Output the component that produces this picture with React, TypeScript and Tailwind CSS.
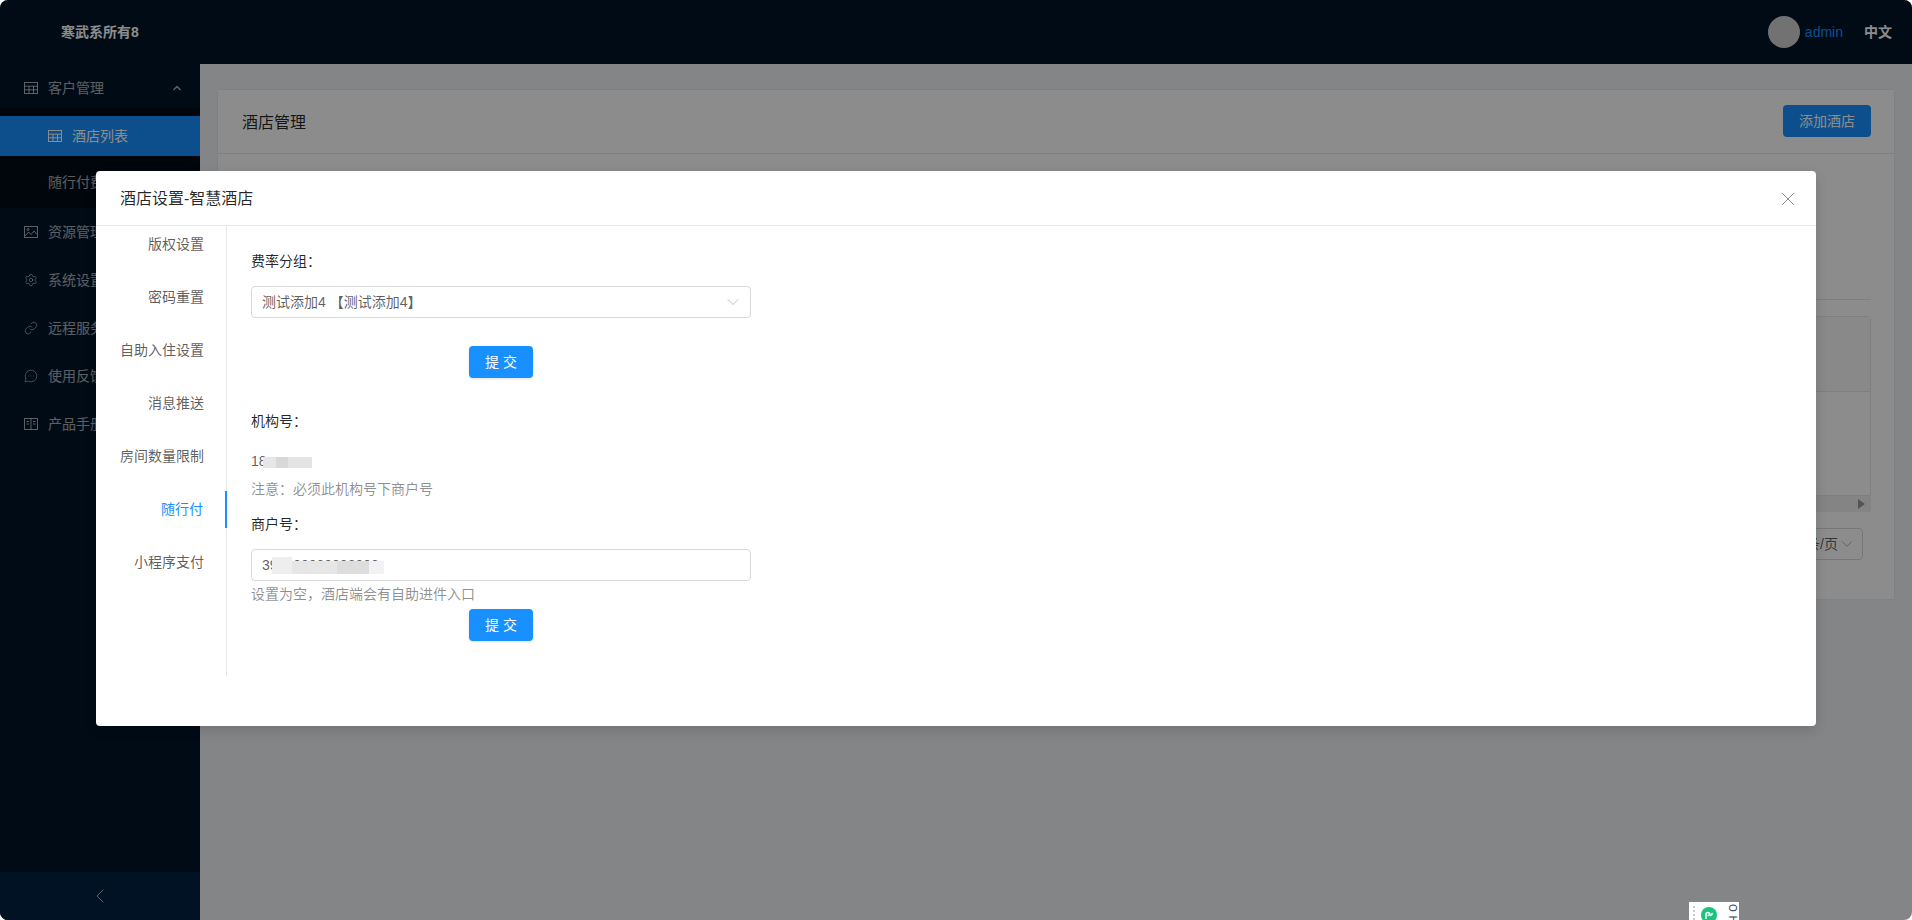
import React from 'react';
import { Settings, Link, MessageCircleMore, ChevronUp, ChevronDown, ChevronLeft, X } from 'lucide-react';

const cjk = { fontFamily: '"Liberation Sans", "Noto Sans CJK SC", sans-serif' };

function TableIcon() {
  return (
    <svg width="14" height="12" viewBox="0 0 14 12" fill="none" stroke="currentColor" strokeWidth="1">
      <rect x="0.5" y="0.5" width="13" height="11" />
      <path d="M0.5 4.2H13.5M0.5 7.8H13.5M5 4.2V11.5M9.5 4.2V11.5" />
    </svg>
  );
}

function PictureIcon() {
  return (
    <svg width="14" height="12" viewBox="0 0 14 12" fill="none" stroke="currentColor" strokeWidth="1">
      <rect x="0.5" y="0.5" width="13" height="11" />
      <path d="M1 10L4.5 6L7 8.5L10 5L13 8.5" />
      <circle cx="4" cy="3.5" r="1" />
    </svg>
  );
}

function ManualIcon() {
  return (
    <svg width="14" height="12" viewBox="0 0 14 12" fill="none" stroke="currentColor" strokeWidth="1">
      <rect x="0.5" y="0.5" width="13" height="11" />
      <path d="M7 0.5V11.5M2.5 3.5H5M2.5 6H5M9 3.5H11.5M9 6H11.5" />
    </svg>
  );
}

const menuItems = [
  { label: '资源管理', icon: <PictureIcon /> },
  { label: '系统设置', icon: <Settings size={14} strokeWidth={1.3} /> },
  { label: '远程服务', icon: <Link size={14} strokeWidth={1.3} /> },
  { label: '使用反馈', icon: <MessageCircleMore size={14} strokeWidth={1.3} /> },
  { label: '产品手册', icon: <ManualIcon /> },
];

const tabs = ['版权设置', '密码重置', '自助入住设置', '消息推送', '房间数量限制', '随行付', '小程序支付'];

function SubmitButton({ className }: { className: string }) {
  return (
    <div className={`flex justify-center w-[500px] ${className}`}>
      <button className="w-16 h-8 bg-[#1890ff] rounded text-white text-sm shadow-sm">提 交</button>
    </div>
  );
}

export default function App() {
  return (
    <div className="relative w-[1912px] h-[920px] overflow-hidden bg-white" style={cjk}>
      <div className="flex flex-col w-full h-full rounded-[8px] overflow-hidden bg-[#f0f2f5]">
        <header className="h-16 shrink-0 bg-[#001529] flex items-center justify-between pl-[61px] pr-[20px]">
          <span className="text-sm font-bold text-white">寒武系所有8</span>
          <div className="flex items-center">
            <div className="w-8 h-8 rounded-full bg-[#d0d0d0]" />
            <span className="ml-[5px] text-sm text-[#1890ff]">admin</span>
            <span className="ml-[21px] text-sm font-bold text-white">中文</span>
          </div>
        </header>
        <div className="flex flex-1 min-h-0">
          <aside className="w-[200px] shrink-0 bg-[#001529] flex flex-col text-sm text-white/65">
            <div className="flex-1 pt-1">
              <div className="h-10 flex items-center pl-6 pr-[17px]">
                <TableIcon />
                <span className="ml-[10px] flex-1">客户管理</span>
                <ChevronUp size={12} strokeWidth={3} />
              </div>
              <div className="bg-[#000c17] h-[100px] pt-2">
                <div className="h-10 flex items-center pl-12 bg-[#1890ff] text-white">
                  <TableIcon />
                  <span className="ml-[10px]">酒店列表</span>
                </div>
                <div className="h-[52px] flex items-center pl-12">随行付费</div>
              </div>
              {menuItems.map((item) => (
                <div key={item.label} className="h-12 flex items-center pl-6">
                  {item.icon}
                  <span className="ml-[10px]">{item.label}</span>
                </div>
              ))}
            </div>
            <div className="h-12 shrink-0 bg-[#002140] flex items-center justify-center">
              <ChevronLeft size={24} strokeWidth={1} />
            </div>
          </aside>
          <main className="flex-1 pt-[25px] pl-[17px] pr-[17px]">
            <div className="h-[511px] bg-white border border-[#ececec]">
              <div className="h-[64px] pb-px border-b border-[#e8e8e8] flex items-center justify-between pl-6 pr-[23px]">
                <span className="mt-[4px] text-base text-black/85">酒店管理</span>
                <button className="w-[88px] h-8 bg-[#1890ff] rounded text-sm text-white">添加酒店</button>
              </div>
              <div className="pl-6 pr-[23px]">
                <div className="mt-[145px] border-t border-[#e8e8e8]" />
                <div className="mt-4 h-[180px] border border-[#e8e8e8] rounded-t">
                  <div className="h-[75px] bg-[#fafafa] border-b border-[#e8e8e8]" />
                </div>
                <div className="h-4 bg-[#f1f1f1] flex items-center justify-end pr-[6px]">
                  <div className="w-0 h-0 border-y-[5px] border-y-transparent border-l-[7px] border-l-[#999]" />
                </div>
                <div className="flex justify-end mt-4 pr-2">
                  <div className="h-8 w-[110px] border border-[#d9d9d9] rounded flex items-center justify-end pr-[6px] text-sm text-black/65">
                    条/页<ChevronDown size={18} strokeWidth={1} className="text-black/40" />
                  </div>
                </div>
              </div>
            </div>
          </main>
        </div>
      </div>

      <div className="absolute inset-0 bg-black/45 rounded-[8px]" />

      {/* mini program widget, not dimmed by the mask */}
      <div className="absolute left-[1689px] top-[902px] w-[50px] h-[18px] bg-white overflow-hidden">
        <div className="absolute left-[4px] top-[4px] h-[14px] border-l-2 border-dotted border-[#ccc]" />
        <svg className="absolute left-[12px] top-[5px]" width="16" height="16" viewBox="0 0 16 16">
          <circle cx="8" cy="8" r="8" fill="#19c37d" />
          <path d="M5 12V7.5C5 6 6 5.5 7 5.5S9 6.5 8.5 7.5 7 8.5 6.5 8.5M8.5 8.5C10 8.5 11.5 7.5 11 6" fill="none" stroke="#fff" strokeWidth="1.6" />
        </svg>
        <div className="absolute left-[38px] top-[2px] text-[10px] leading-[10px] tracking-[4px] text-[#2b3a67] [writing-mode:vertical-rl]">OH</div>
      </div>

      <div className="absolute left-[96px] top-[171px] w-[1720px] h-[555px] bg-white rounded shadow-[0_4px_12px_rgba(0,0,0,0.15)]">
        <div className="h-[55px] pt-[2px] border-b border-[#e8e8e8] flex items-center justify-between pl-6 pr-[17px]">
          <span className="text-base text-black/85">酒店设置-智慧酒店</span>
          <X size={22} strokeWidth={1} className="text-black/50" />
        </div>
        <div className="flex h-[450px]">
          <div className="w-[131px] border-r border-[#e8e8e8] text-sm text-black/65">
            {tabs.map((t) => (
              <div
                key={t}
                className={`h-[37px] mb-4 pb-[2px] flex items-center justify-end -mr-px ${t === '随行付' ? 'pr-[22px] text-[#1890ff] border-r-2 border-[#1890ff]' : 'pr-[23px]'}`}
              >
                {t}
              </div>
            ))}
          </div>
          <div className="flex-1 pl-6 text-sm text-black/65">
            <div className="mt-[25px] text-black/85">费率分组：</div>
            <div className="mt-[15px] w-[500px] h-8 border border-[#d9d9d9] rounded flex items-center justify-between pl-[10px] pr-[7px]">
              <span>测试添加4 【测试添加4】</span>
              <ChevronDown size={20} strokeWidth={1} className="text-black/30" />
            </div>
            <SubmitButton className="mt-7" />
            <div className="mt-[33px] text-black/85">机构号：</div>
            <div className="relative mt-[20px] h-[21px] leading-[21px]">
              18
              <div className="absolute left-[12px] top-[6px] flex h-[11px]">
                <div className="w-[13px] bg-[#e6e6e6]" />
                <div className="w-[12px] bg-[#d8d8d8]" />
                <div className="w-[24px] bg-[#e4e4e4]" />
              </div>
            </div>
            <div className="mt-[7px] text-black/45">注意：必须此机构号下商户号</div>
            <div className="mt-[15px] text-black/85">商户号：</div>
            <div className="relative mt-[15px] w-[500px] h-8 border border-[#d9d9d9] rounded flex items-center pl-[10px]">
              390000000000000
              <div className="absolute left-[20px] top-[7px] w-[20px] h-[17px] bg-[#eeeeee]" />
              <div className="absolute left-[40px] top-[11px] flex h-[13px]">
                <div className="w-[45px] bg-[#e6e6e6]" />
                <div className="w-[32px] bg-[#dddddd]" />
                <div className="w-[15px] bg-[#f2f2f2]" />
              </div>
            </div>
            <div className="mt-[3px] text-black/45">设置为空，酒店端会有自助进件入口</div>
            <SubmitButton className="mt-[5px]" />
          </div>
        </div>
      </div>
    </div>
  );
}
